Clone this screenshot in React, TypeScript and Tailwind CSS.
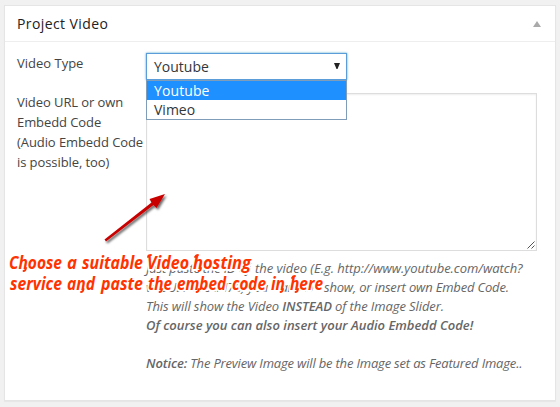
type Word = { text: string; x: number; w: number; y: number };

const words: Word[] = [
  { text: "Choose", x: 9, w: 53, y: 269 },
  { text: "a", x: 67, w: 10, y: 269 },
  { text: "suitable", x: 82, w: 61, y: 269 },
  { text: "Video", x: 147, w: 42, y: 269 },
  { text: "hosting", x: 193, w: 58, y: 269 },
  { text: "service", x: 10, w: 52, y: 290 },
  { text: "and", x: 67, w: 28, y: 290 },
  { text: "paste", x: 101, w: 42, y: 290 },
  { text: "the", x: 148, w: 24, y: 290 },
  { text: "embed", x: 177, w: 49, y: 290 },
  { text: "code", x: 232, w: 34, y: 290 },
  { text: "in", x: 271, w: 14, y: 290 },
  { text: "here", x: 290, w: 33, y: 290 },
];

function Annotation() {
  return (
    <svg className="pointer-events-none absolute inset-0" width="560" height="407" viewBox="0 0 560 407">
      <defs>
        <filter id="shade" x="-20%" y="-20%" width="150%" height="150%">
          <feDropShadow dx="1.5" dy="2" stdDeviation="1.2" floodColor="#000" floodOpacity="0.6" />
        </filter>
      </defs>
      <path d="M104.5 239.5 L151.5 202.5 L149.5 199 L165 194 L156.5 208 L153.5 205 L106 241.5 Z" fill="#c80000" filter="url(#shade)" />
      <g
        fontFamily="'Open Sans', sans-serif"
        fontWeight="700"
        fontStyle="italic"
        fontSize="18.5"
        fill="#ff3300"
        stroke="#ffffff"
        strokeWidth="4"
        strokeLinejoin="round"
        paintOrder="stroke"
      >
        {words.map((w) => (
          <text key={w.text} x={w.x} y={w.y} textLength={w.w} lengthAdjust="spacingAndGlyphs">
            {w.text}
          </text>
        ))}
      </g>
      {/* Swashes on the lettering */}
      <g fill="none" stroke="#ff3300" strokeWidth="1.8" strokeLinecap="round">
        <path d="M26 268q-.5 3-2.5 3M201 268q-.5 3-2.5 3M83.500 289q-.5 3-2.5 3M162 289q-.5 3-2.5 3M199 289q-.5 3-2.5 3M283 289q-.5 3-2.5 3M298 289q-.5 3-2.5 3" />
        <path d="M148 257q0-2 3-2M195 257q1-2 3-2M292 278q1-2 3-2" />
      </g>
    </svg>
  );
}

function VideoTypeSelect() {
  return (
    <div className="relative h-[27px] w-[201px] border border-[#5b9dd9] bg-white shadow-[0_0_2px_rgba(30,140,190,0.8)]">
      <div className="flex h-[25px] items-center justify-between pr-1.5 pl-[7px] text-[14px] text-[#32373c]">
        <span>Youtube</span>
        <svg width="6" height="6" viewBox="0 0 6 6" className="-mt-0.5">
          <path d="M0 0H6L3.5 6H2.5Z" fill="#222" />
        </svg>
      </div>
      <div className="absolute top-[26px] -left-px z-10 w-[201px] border border-[#7f9db9] bg-white text-[14px] leading-[19px] text-[#32373c]">
        <div className="bg-[#1e90ff] pl-[7px] tracking-[0.1px] text-white">Youtube</div>
        <div className="pl-[7px]">Vimeo</div>
      </div>
    </div>
  );
}

export default function App() {
  return (
    <div className="relative h-[407px] w-[560px] overflow-hidden bg-[#f1f1f1] pt-[5px] pl-1 font-['Open_Sans',sans-serif] text-[13px] text-[#444]">
      <section className="h-[396px] w-[552px] border border-[#e5e5e5] bg-white shadow-[0_1px_1px_rgba(0,0,0,0.04)]">
        <header className="flex h-9 items-center justify-between border-b border-[#eee] pr-[14px] pl-3">
          <h3 className="text-[14px] font-medium tracking-[0.4px] text-[#222]">Project Video</h3>
          <svg width="8" height="6" viewBox="0 0 8 6">
            <path d="M0 6L4 0L8 6Z" fill="#aaa" />
          </svg>
        </header>
        <div className="flex flex-col pt-[11px] pl-3">
          <div className="flex h-10">
            <div className="w-[129px] leading-5">Video Type</div>
            <VideoTypeSelect />
          </div>
          <div className="-mt-px flex">
            <div className="w-[129px] shrink-0 leading-5 tracking-[-0.08px] whitespace-nowrap">
              Video URL or own
              <br />
              Embedd Code
              <br />
              (Audio Embedd Code
              <br />
              is possible, too)
            </div>
            <div className="w-[391px] pt-px">
              <div className="flex h-[158px] w-[391px] items-end justify-end border border-[#ddd] bg-white pr-px pb-px shadow-[inset_0_1px_2px_rgba(0,0,0,0.07)]">
                <svg width="8" height="8" viewBox="0 0 8 8" stroke="#555" strokeWidth="1">
                  <path d="M0.5 7.5L7.5 0.5M4.5 7.5L7.5 4.5" />
                </svg>
              </div>
              <p className="pt-[8px] text-[13px] leading-[19px] tracking-[-0.18px] whitespace-nowrap text-[#666] italic">
                <span className="inline-block w-[109px]">Just paste the ID of</span>
                <span className="tracking-[-0.02px]">the video (E.g. http://www.youtube.com/watch?</span>
                <br />
                <span className="inline-block w-[178px]">v=GUEZCxBcM78) you want to</span>
                <span className="tracking-[-0.18px]">show, or insert own Embed Code.</span>
                <br />
                <span className="tracking-[-0.09px]">
                  This will show the Video <b className="font-semibold">INSTEAD</b> of the Image Slider.
                </span>
                <br />
                <b className="font-semibold tracking-normal">Of course you can also insert your Audio Embedd Code!</b>
                <br />
                <br />
                <b className="font-semibold tracking-[-0.1px]">Notice:</b> The Preview Image will be the Image set as Featured Image..
              </p>
            </div>
          </div>
        </div>
      </section>
      <Annotation />
    </div>
  );
}
